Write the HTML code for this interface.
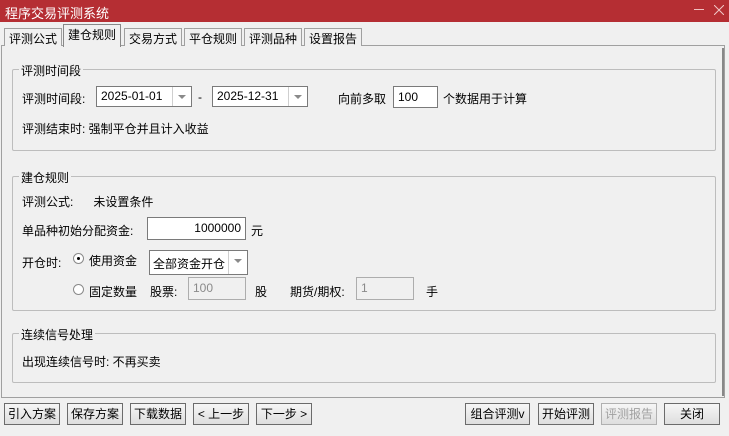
<html><head><style>
body{margin:0;width:729px;height:436px;background:#f0f0f0;font-family:"Liberation Sans","Noto Sans CJK SC",sans-serif;font-size:12px;color:#000;position:relative;overflow:hidden}
.a{position:absolute}
.t{white-space:nowrap}
.grp{position:absolute;border:1px solid #bdbdbd;border-radius:2px}
.lg{position:absolute;top:-8px;left:6px;background:#f0f0f0;padding:0 2px}
.box{position:absolute;background:#fff;border:1px solid #7a7a7a;box-sizing:border-box}
.dis{background:#f0f0f0;border-color:#adadad;color:#8a8a8a}
.btn{position:absolute;top:403px;height:22px;border:1px solid #6b6b6b;background:linear-gradient(#f6f6f6,#dedede);box-sizing:border-box;text-align:center;line-height:20px}
.tab{position:absolute;top:26px;height:20px;border:1px solid #a0a0a0;border-bottom:none;background:#f0f0f0;line-height:20px;padding:0 4px;box-sizing:border-box}
.dd{position:absolute;right:0;top:0;bottom:0;width:18px;border-left:1px solid #cfcfcf}
.dd:after{content:"";position:absolute;left:5px;top:8px;border:4px solid transparent;border-top:4px solid #8a8a8a}
.r{position:absolute;width:11px;height:11px;border-radius:50%;border:1px solid #8a8a8a;background:#fff;box-sizing:border-box}
</style></head><body>
<div class="a" style="left:0;top:0;width:729px;height:22px;background:#b52e33"></div>
<div class="a t" style="left:5px;top:3px;color:#fff;font-size:13px">程序交易评测系统</div>
<div class="a" style="left:694px;top:9px;width:10px;height:1px;background:#f0c0c0"></div>
<svg class="a" style="left:714px;top:5px" width="10" height="10"><path d="M0 0L10 10M10 0L0 10" stroke="#f0c8c8" stroke-width="1"/></svg>
<div class="a" style="left:1px;top:45px;width:722px;height:351px;border:1px solid #a0a0a0"></div>
<div class="tab" style="left:4px;top:28px;height:18px">评测公式</div>
<div class="tab" style="left:63px;top:24px;height:23px;background:#f0f0f0;border-color:#888;z-index:2">建仓规则</div>
<div class="tab" style="left:124px;top:28px;height:18px">交易方式</div>
<div class="tab" style="left:184px;top:28px;height:18px">平仓规则</div>
<div class="tab" style="left:244px;top:28px;height:18px">评测品种</div>
<div class="tab" style="left:304px;top:28px;height:18px">设置报告</div>
<div class="a" style="left:722px;top:48px;width:2px;height:348px;background:#888"></div>

<div class="grp" style="left:12px;top:69px;width:702px;height:80px"><span class="lg">评测时间段</span></div>
<div class="a t" style="left:22px;top:90px">评测时间段:</div>
<div class="box" style="left:96px;top:86px;width:96px;height:21px;padding:2px 4px">2025-01-01<div class="dd"></div></div>
<div class="a t" style="left:198px;top:90px">-</div>
<div class="box" style="left:212px;top:86px;width:96px;height:21px;padding:2px 4px">2025-12-31<div class="dd"></div></div>
<div class="a t" style="left:338px;top:90px">向前多取</div>
<div class="box" style="left:393px;top:86px;width:45px;height:22px;padding:3px 4px">100</div>
<div class="a t" style="left:443px;top:90px">个数据用于计算</div>
<div class="a t" style="left:22px;top:120px">评测结束时: 强制平仓并且计入收益</div>

<div class="grp" style="left:12px;top:176px;width:702px;height:133px"><span class="lg">建仓规则</span></div>
<div class="a t" style="left:22px;top:193px">评测公式:&nbsp;&nbsp;&nbsp;&nbsp;&nbsp;&nbsp;未设置条件</div>
<div class="a t" style="left:22px;top:222px">单品种初始分配资金:</div>
<div class="box" style="left:147px;top:217px;width:99px;height:23px;padding:3px 4px;text-align:right">1000000</div>
<div class="a t" style="left:251px;top:222px">元</div>
<div class="a t" style="left:22px;top:254px">开仓时:</div>
<div class="r" style="left:73px;top:253px"><div class="a" style="left:3px;top:3px;width:3px;height:3px;background:#000;border-radius:50%"></div></div>
<div class="a t" style="left:89px;top:252px">使用资金</div>
<div class="box" style="left:149px;top:250px;width:99px;height:25px;padding:4px 3px">全部资金开仓<div class="dd"></div></div>
<div class="r" style="left:73px;top:284px"></div>
<div class="a t" style="left:89px;top:283px">固定数量</div>
<div class="a t" style="left:150px;top:283px">股票:</div>
<div class="box dis" style="left:188px;top:277px;width:58px;height:23px;padding:3px 4px">100</div>
<div class="a t" style="left:255px;top:283px">股</div>
<div class="a t" style="left:290px;top:283px">期货/期权:</div>
<div class="box dis" style="left:356px;top:277px;width:58px;height:23px;padding:3px 4px">1</div>
<div class="a t" style="left:426px;top:283px">手</div>

<div class="grp" style="left:12px;top:333px;width:702px;height:48px"><span class="lg">连续信号处理</span></div>
<div class="a t" style="left:22px;top:353px">出现连续信号时: 不再买卖</div>

<div class="btn" style="left:4px;width:56px">引入方案</div>
<div class="btn" style="left:67px;width:56px">保存方案</div>
<div class="btn" style="left:130px;width:56px">下载数据</div>
<div class="btn" style="left:193px;width:56px">&lt; 上一步</div>
<div class="btn" style="left:256px;width:56px">下一步 &gt;</div>
<div class="btn" style="left:465px;width:65px">组合评测v</div>
<div class="btn" style="left:538px;width:56px">开始评测</div>
<div class="btn" style="left:601px;width:56px;color:#a0a0a0;border-color:#b0b0b0">评测报告</div>
<div class="btn" style="left:664px;width:56px">关闭</div>
</body></html>
